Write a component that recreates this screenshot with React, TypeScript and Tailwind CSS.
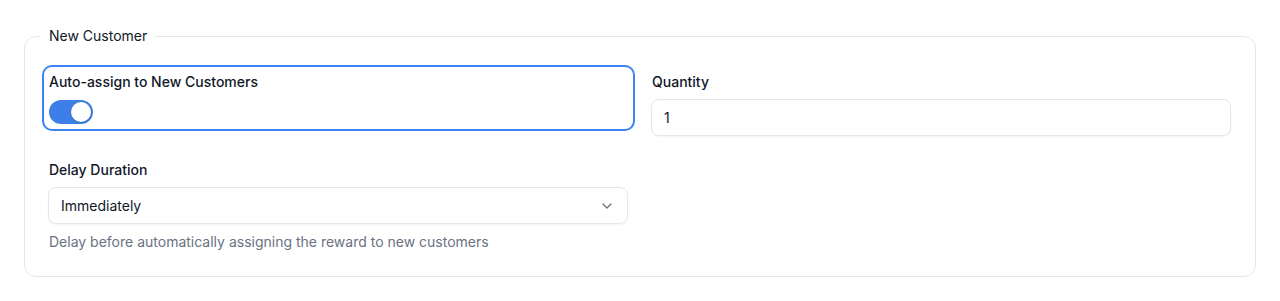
import { useState } from "react";

export default function App() {
  const [enabled, setEnabled] = useState(true);
  const [quantity, setQuantity] = useState("1");

  return (
    <div className="bg-white px-6 pt-[26px] pb-6 font-['Inter',sans-serif] text-sm text-gray-900">
      <fieldset className="rounded-xl border border-gray-200 px-6 pb-6 pt-[26px]">
        <legend className="-ml-2 px-2 text-sm leading-5 text-gray-900">New Customer</legend>

        <div className="grid grid-cols-2 items-start gap-x-6 gap-y-6">
          <div className="-mx-px -my-px flex flex-col gap-2 rounded-[4px] px-px py-px outline-2 outline-offset-4 outline-[#3b82f6]">
            <span className="font-medium leading-5">Auto-assign to New Customers</span>
            <button
              type="button"
              role="switch"
              aria-checked={enabled}
              onClick={() => setEnabled(!enabled)}
              className={`flex h-6 w-11 items-center rounded-full p-0.5 transition-colors ${
                enabled ? "bg-[#3d7fe6]" : "bg-gray-200"
              }`}
            >
              <span
                className={`h-5 w-5 rounded-full bg-white shadow-sm transition-transform ${
                  enabled ? "translate-x-5" : "translate-x-0"
                }`}
              />
            </button>
          </div>

          <div className="flex flex-col gap-[7px]">
            <label className="font-medium leading-5">Quantity</label>
            <input
              value={quantity}
              onChange={(e) => setQuantity(e.target.value)}
              className="-ml-px h-[37px] rounded-lg border border-gray-200 px-3 text-sm text-gray-900 shadow-xs outline-none"
            />
          </div>

          <div className="flex flex-col">
            <label className="mb-[7px] font-medium leading-5">Delay Duration</label>
            <button
              type="button"
              className="-ml-px flex h-[37px] items-center justify-between rounded-lg border border-gray-200 px-3 text-left shadow-xs"
            >
              <span>Immediately</span>
              <svg width="16" height="16" viewBox="0 0 24 24" fill="none" stroke="#6b7280" strokeWidth="2" strokeLinecap="round" strokeLinejoin="round">
                <path d="m6 9 6 6 6-6" />
              </svg>
            </button>
            <p className="mt-2 leading-5 text-gray-500">Delay before automatically assigning the reward to new customers</p>
          </div>
        </div>
      </fieldset>
    </div>
  );
}
